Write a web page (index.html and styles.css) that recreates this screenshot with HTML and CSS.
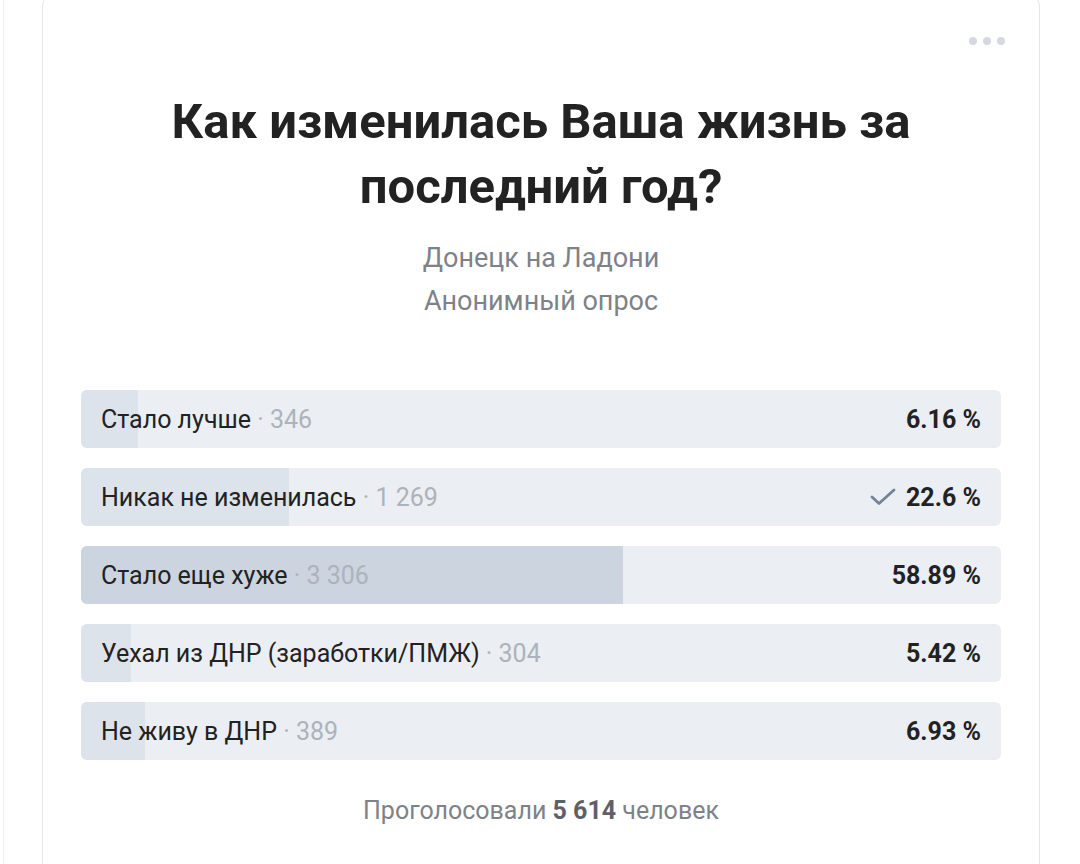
FILE: index.html
```html
<!DOCTYPE html>
<html lang="ru">
<head>
<meta charset="utf-8">
<link rel="stylesheet" href="styles.css">
</head>
<body>
<div class="page">
  <div class="card">
    <div class="menu"><span></span><span></span><span></span></div>
    <h1 class="title">Как изменилась Ваша жизнь за<br>последний год?</h1>
    <div class="meta">
      <div>Донецк на Ладони</div>
      <div>Анонимный опрос</div>
    </div>
    <div class="answers">
      <div class="answer">
        <div class="fill" style="width:6.16%"></div>
        <div class="label">Стало лучше <span class="count">· 346</span></div>
        <div class="percent">6.16 %</div>
      </div>
      <div class="answer">
        <div class="fill" style="width:22.6%"></div>
        <div class="label">Никак не изменилась <span class="count">· 1 269</span></div>
        <div class="percent"><svg class="check" viewBox="0 0 26 18" width="26" height="18"><path d="M2 9 L9 15.5 L24 2" fill="none" stroke="#72839a" stroke-width="2.8" stroke-linecap="round" stroke-linejoin="round"/></svg>22.6 %</div>
      </div>
      <div class="answer">
        <div class="fill lead" style="width:58.89%"></div>
        <div class="label">Стало еще хуже <span class="count">· 3 306</span></div>
        <div class="percent">58.89 %</div>
      </div>
      <div class="answer">
        <div class="fill" style="width:5.42%"></div>
        <div class="label">Уехал из ДНР (заработки/ПМЖ) <span class="count">· 304</span></div>
        <div class="percent">5.42 %</div>
      </div>
      <div class="answer">
        <div class="fill" style="width:6.93%"></div>
        <div class="label">Не живу в ДНР <span class="count">· 389</span></div>
        <div class="percent">6.93 %</div>
      </div>
    </div>
    <div class="total">Проголосовали <b>5 614</b> человек</div>
  </div>
</div>
</body>
</html>
```
FILE: styles.css
```css
html, body {
  margin: 0;
  padding: 0;
  background: #ffffff;
  font-family: Roboto, "Noto Sans", Arial, sans-serif;
}
.page {
  height: 864px;
  overflow: hidden;
  border-left: 1px solid #eceef1;
  margin-left: 3px;
  padding-left: 38px;
}
.card {
  position: relative;
  width: 998px;
  box-sizing: border-box;
  margin-top: -6px;
  height: 900px;
  border: 1px solid #e3e5e9;
  border-radius: 12px;
  padding: 94px 38px 0;
  background: #fff;
}
.menu {
  position: absolute;
  top: 42px;
  right: 34px;
  display: flex;
  gap: 6px;
}
.menu span {
  width: 8px;
  height: 8px;
  border-radius: 50%;
  background: #d5d9df;
}
.title {
  margin: 0;
  text-align: center;
  font-size: 49px;
  line-height: 65px;
  font-weight: 700;
  color: #222222;
}
.meta {
  margin-top: 18px;
  text-align: center;
  font-size: 27px;
  line-height: 43px;
  color: #7e8287;
}
.answers {
  margin-top: 67px;
  display: flex;
  flex-direction: column;
  gap: 20px;
}
.answer {
  position: relative;
  height: 58px;
  border-radius: 6px;
  background: #ebeef3;
  display: flex;
  align-items: center;
  justify-content: space-between;
  padding: 0 20px;
  overflow: hidden;
  font-size: 25px;
  color: #222222;
}
.fill {
  position: absolute;
  left: 0;
  top: 0;
  bottom: 0;
  background: #dde3ea;
}
.fill.lead {
  background: #cbd4df;
}
.label, .percent {
  position: relative;
}
.count {
  color: #adb3ba;
}
.percent {
  font-weight: 700;
  display: flex;
  align-items: center;
  gap: 10px;
}
.check {
  display: block;
}
.total {
  margin-top: 36px;
  text-align: center;
  font-size: 25px;
  line-height: 30px;
  color: #7e8287;
}
.total b {
  color: #5d6167;
}
```
